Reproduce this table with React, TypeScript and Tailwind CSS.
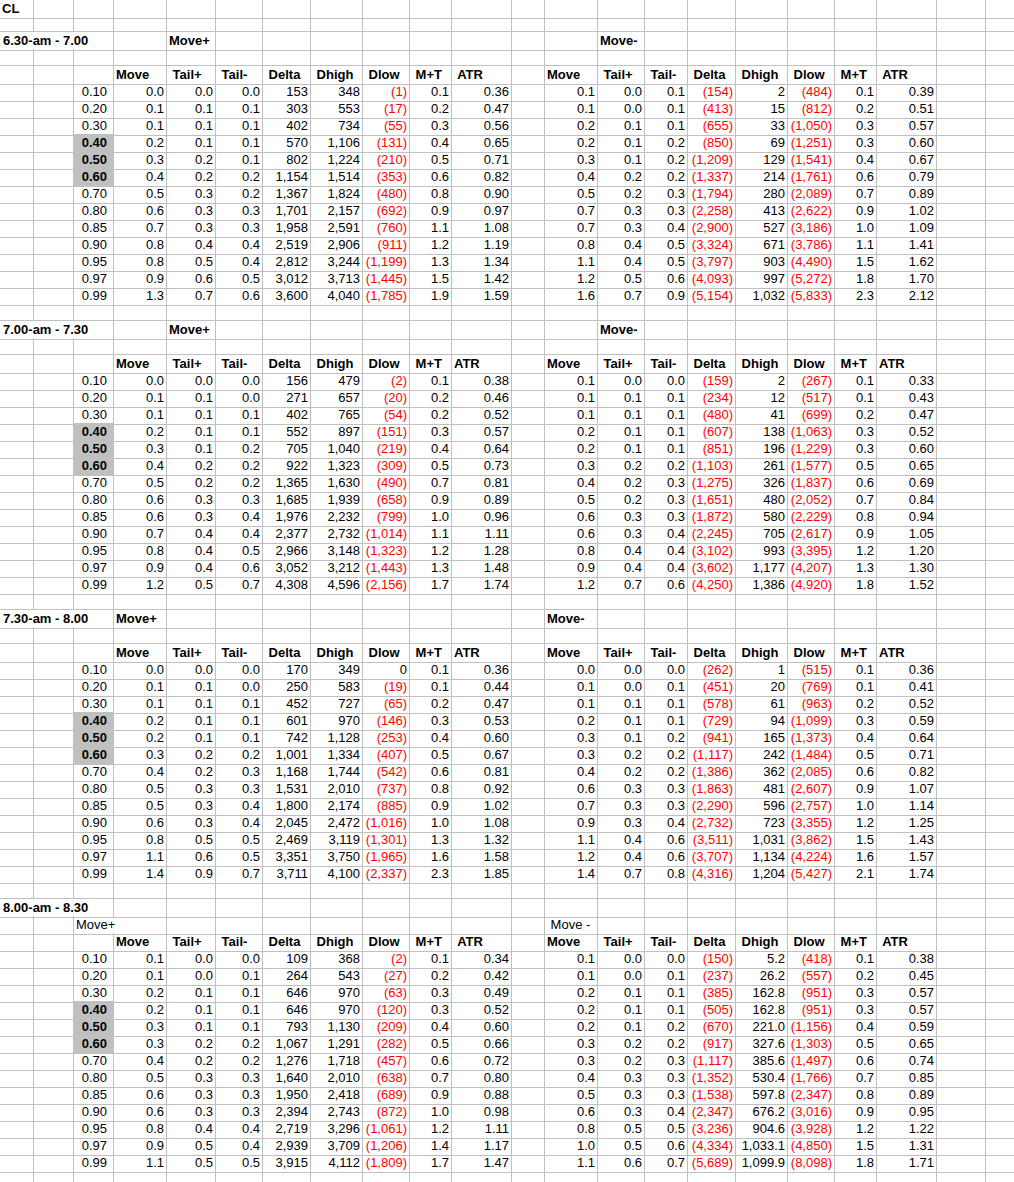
import clsx from 'clsx';
import type { ReactNode } from 'react';

// column template: A .. V, widths include the 1px right gridline
const GRID =
  'grid grid-cols-[34px_40px_40px_53px_49px_47px_48px_52px_47px_42px_60px_33px_53px_47px_43px_48px_52px_47px_42px_60px_49px_64px]';

const PCTS = ['0.10', '0.20', '0.30', '0.40', '0.50', '0.60', '0.70', '0.80', '0.85', '0.90', '0.95', '0.97', '0.99'];
const SHADED = ['0.40', '0.50', '0.60'];

type Section = {
  title: string;
  atrSpace: boolean;
  left: string[];
  right: string[];
};

const sections: Section[] = [
  {
    title: '6.30-am - 7.00',
    atrSpace: true,
    left: [
      '0.0 0.0 0.0 153 348 (1) 0.1 0.36',
      '0.1 0.1 0.1 303 553 (17) 0.2 0.47',
      '0.1 0.1 0.1 402 734 (55) 0.3 0.56',
      '0.2 0.1 0.1 570 1,106 (131) 0.4 0.65',
      '0.3 0.2 0.1 802 1,224 (210) 0.5 0.71',
      '0.4 0.2 0.2 1,154 1,514 (353) 0.6 0.82',
      '0.5 0.3 0.2 1,367 1,824 (480) 0.8 0.90',
      '0.6 0.3 0.3 1,701 2,157 (692) 0.9 0.97',
      '0.7 0.3 0.3 1,958 2,591 (760) 1.1 1.08',
      '0.8 0.4 0.4 2,519 2,906 (911) 1.2 1.19',
      '0.8 0.5 0.4 2,812 3,244 (1,199) 1.3 1.34',
      '0.9 0.6 0.5 3,012 3,713 (1,445) 1.5 1.42',
      '1.3 0.7 0.6 3,600 4,040 (1,785) 1.9 1.59',
    ],
    right: [
      '0.1 0.0 0.1 (154) 2 (484) 0.1 0.39',
      '0.1 0.0 0.1 (413) 15 (812) 0.2 0.51',
      '0.2 0.1 0.1 (655) 33 (1,050) 0.3 0.57',
      '0.2 0.1 0.2 (850) 69 (1,251) 0.3 0.60',
      '0.3 0.1 0.2 (1,209) 129 (1,541) 0.4 0.67',
      '0.4 0.2 0.2 (1,337) 214 (1,761) 0.6 0.79',
      '0.5 0.2 0.3 (1,794) 280 (2,089) 0.7 0.89',
      '0.7 0.3 0.3 (2,258) 413 (2,622) 0.9 1.02',
      '0.7 0.3 0.4 (2,900) 527 (3,186) 1.0 1.09',
      '0.8 0.4 0.5 (3,324) 671 (3,786) 1.1 1.41',
      '1.1 0.4 0.5 (3,797) 903 (4,490) 1.5 1.62',
      '1.2 0.5 0.6 (4,093) 997 (5,272) 1.8 1.70',
      '1.6 0.7 0.9 (5,154) 1,032 (5,833) 2.3 2.12',
    ],
  },
  {
    title: '7.00-am - 7.30',
    atrSpace: false,
    left: [
      '0.0 0.0 0.0 156 479 (2) 0.1 0.38',
      '0.1 0.1 0.0 271 657 (20) 0.2 0.46',
      '0.1 0.1 0.1 402 765 (54) 0.2 0.52',
      '0.2 0.1 0.1 552 897 (151) 0.3 0.57',
      '0.3 0.1 0.2 705 1,040 (219) 0.4 0.64',
      '0.4 0.2 0.2 922 1,323 (309) 0.5 0.73',
      '0.5 0.2 0.2 1,365 1,630 (490) 0.7 0.81',
      '0.6 0.3 0.3 1,685 1,939 (658) 0.9 0.89',
      '0.6 0.3 0.4 1,976 2,232 (799) 1.0 0.96',
      '0.7 0.4 0.4 2,377 2,732 (1,014) 1.1 1.11',
      '0.8 0.4 0.5 2,966 3,148 (1,323) 1.2 1.28',
      '0.9 0.4 0.6 3,052 3,212 (1,443) 1.3 1.48',
      '1.2 0.5 0.7 4,308 4,596 (2,156) 1.7 1.74',
    ],
    right: [
      '0.1 0.0 0.0 (159) 2 (267) 0.1 0.33',
      '0.1 0.1 0.1 (234) 12 (517) 0.1 0.43',
      '0.1 0.1 0.1 (480) 41 (699) 0.2 0.47',
      '0.2 0.1 0.1 (607) 138 (1,063) 0.3 0.52',
      '0.2 0.1 0.1 (851) 196 (1,229) 0.3 0.60',
      '0.3 0.2 0.2 (1,103) 261 (1,577) 0.5 0.65',
      '0.4 0.2 0.3 (1,275) 326 (1,837) 0.6 0.69',
      '0.5 0.2 0.3 (1,651) 480 (2,052) 0.7 0.84',
      '0.6 0.3 0.3 (1,872) 580 (2,229) 0.8 0.94',
      '0.6 0.3 0.4 (2,245) 705 (2,617) 0.9 1.05',
      '0.8 0.4 0.4 (3,102) 993 (3,395) 1.2 1.20',
      '0.9 0.4 0.4 (3,602) 1,177 (4,207) 1.3 1.30',
      '1.2 0.7 0.6 (4,250) 1,386 (4,920) 1.8 1.52',
    ],
  },
  {
    title: '7.30-am - 8.00',
    atrSpace: false,
    left: [
      '0.0 0.0 0.0 170 349 0 0.1 0.36',
      '0.1 0.1 0.0 250 583 (19) 0.1 0.44',
      '0.1 0.1 0.1 452 727 (65) 0.2 0.47',
      '0.2 0.1 0.1 601 970 (146) 0.3 0.53',
      '0.2 0.1 0.1 742 1,128 (253) 0.4 0.60',
      '0.3 0.2 0.2 1,001 1,334 (407) 0.5 0.67',
      '0.4 0.2 0.3 1,168 1,744 (542) 0.6 0.81',
      '0.5 0.3 0.3 1,531 2,010 (737) 0.8 0.92',
      '0.5 0.3 0.4 1,800 2,174 (885) 0.9 1.02',
      '0.6 0.3 0.4 2,045 2,472 (1,016) 1.0 1.08',
      '0.8 0.5 0.5 2,469 3,119 (1,301) 1.3 1.32',
      '1.1 0.6 0.5 3,351 3,750 (1,965) 1.6 1.58',
      '1.4 0.9 0.7 3,711 4,100 (2,337) 2.3 1.85',
    ],
    right: [
      '0.0 0.0 0.0 (262) 1 (515) 0.1 0.36',
      '0.1 0.0 0.1 (451) 20 (769) 0.1 0.41',
      '0.1 0.1 0.1 (578) 61 (963) 0.2 0.52',
      '0.2 0.1 0.1 (729) 94 (1,099) 0.3 0.59',
      '0.3 0.1 0.2 (941) 165 (1,373) 0.4 0.64',
      '0.3 0.2 0.2 (1,117) 242 (1,484) 0.5 0.71',
      '0.4 0.2 0.2 (1,386) 362 (2,085) 0.6 0.82',
      '0.6 0.3 0.3 (1,863) 481 (2,607) 0.9 1.07',
      '0.7 0.3 0.3 (2,290) 596 (2,757) 1.0 1.14',
      '0.9 0.3 0.4 (2,732) 723 (3,355) 1.2 1.25',
      '1.1 0.4 0.6 (3,511) 1,031 (3,862) 1.5 1.43',
      '1.2 0.4 0.6 (3,707) 1,134 (4,224) 1.6 1.57',
      '1.4 0.7 0.8 (4,316) 1,204 (5,427) 2.1 1.74',
    ],
  },
  {
    title: '8.00-am - 8.30',
    atrSpace: true,
    left: [
      '0.1 0.0 0.0 109 368 (2) 0.1 0.34',
      '0.1 0.0 0.1 264 543 (27) 0.2 0.42',
      '0.2 0.1 0.1 646 970 (63) 0.3 0.49',
      '0.2 0.1 0.1 646 970 (120) 0.3 0.52',
      '0.3 0.1 0.1 793 1,130 (209) 0.4 0.60',
      '0.3 0.2 0.2 1,067 1,291 (282) 0.5 0.66',
      '0.4 0.2 0.2 1,276 1,718 (457) 0.6 0.72',
      '0.5 0.3 0.3 1,640 2,010 (638) 0.7 0.80',
      '0.6 0.3 0.3 1,950 2,418 (689) 0.9 0.88',
      '0.6 0.3 0.3 2,394 2,743 (872) 1.0 0.98',
      '0.8 0.4 0.4 2,719 3,296 (1,061) 1.2 1.11',
      '0.9 0.5 0.4 2,939 3,709 (1,206) 1.4 1.17',
      '1.1 0.5 0.5 3,915 4,112 (1,809) 1.7 1.47',
    ],
    right: [
      '0.1 0.0 0.0 (150) 5.2 (418) 0.1 0.38',
      '0.1 0.0 0.1 (237) 26.2 (557) 0.2 0.45',
      '0.2 0.1 0.1 (385) 162.8 (951) 0.3 0.57',
      '0.2 0.1 0.1 (505) 162.8 (951) 0.3 0.57',
      '0.2 0.1 0.2 (670) 221.0 (1,156) 0.4 0.59',
      '0.3 0.2 0.2 (917) 327.6 (1,303) 0.5 0.65',
      '0.3 0.2 0.3 (1,117) 385.6 (1,497) 0.6 0.74',
      '0.4 0.3 0.3 (1,352) 530.4 (1,766) 0.7 0.85',
      '0.5 0.3 0.3 (1,538) 597.8 (2,347) 0.8 0.89',
      '0.6 0.3 0.4 (2,347) 676.2 (3,016) 0.9 0.95',
      '0.8 0.5 0.5 (3,236) 904.6 (3,928) 1.2 1.22',
      '1.0 0.5 0.6 (4,334) 1,033.1 (4,850) 1.5 1.31',
      '1.1 0.6 0.7 (5,689) 1,099.9 (8,098) 1.8 1.71',
    ],
  },
];

type CellProps = {
  text?: string;
  span?: 2 | 3;
  right?: boolean;
  bold?: boolean;
  fill?: boolean;
  className?: string;
};

function Cell({ text = '', span, right, bold, fill, className }: CellProps) {
  const red = text.startsWith('(');
  return (
    <div
      className={clsx(
        'h-full border-r border-b border-[#c0c0c0] whitespace-pre leading-[18px]',
        span === 2 && 'col-span-2',
        span === 3 && 'col-span-3',
        right ? 'text-right pr-[2px]' : 'pl-[2px]',
        bold && 'font-bold',
        fill && 'bg-[#c0c0c0]',
        red ? 'text-[#ff0000]' : 'text-black',
        className,
      )}
    >
      {text}
    </div>
  );
}

function Row({ children, first }: { children?: ReactNode; first?: boolean }) {
  return <div className={clsx(GRID, first ? 'h-[15px]' : 'h-[17px]')}>{children}</div>;
}

function blanks(n: number) {
  return Array.from({ length: n }, (_, i) => <Cell key={`b${i}`} />);
}

function BlankRow() {
  return <Row>{blanks(22)}</Row>;
}

function TitleRow({ title, at }: { title: string; at: 'D' | 'E' | 'none' }) {
  // D..V is 19 cells after the A-C span
  return (
    <Row>
      <Cell text={title} span={3} bold className="pl-[3px]" />
      {at === 'D' && (
        <>
          <Cell text="Move+" bold />
          {blanks(8)}
          <Cell text="Move-" bold />
          {blanks(9)}
        </>
      )}
      {at === 'E' && (
        <>
          <Cell />
          <Cell text="Move+" bold />
          {blanks(8)}
          <Cell text="Move-" bold />
          {blanks(8)}
        </>
      )}
      {at === 'none' && blanks(19)}
    </Row>
  );
}

function HeaderRow({ atrSpace }: { atrSpace: boolean }) {
  const heads = ['Move', ' Tail+', ' Tail-', ' Delta', ' Dhigh', ' Dlow', ' M+T', atrSpace ? ' ATR' : 'ATR'];
  return (
    <Row>
      {blanks(3)}
      {heads.map((h) => (
        <Cell key={`l${h}`} text={h} bold />
      ))}
      <Cell />
      {heads.map((h) => (
        <Cell key={`r${h}`} text={h} bold />
      ))}
      <Cell />
      <Cell />
    </Row>
  );
}

function DataRow({ pct, left, right }: { pct: string; left: string; right: string }) {
  const shaded = SHADED.includes(pct);
  return (
    <Row>
      <Cell />
      <Cell />
      <Cell text={pct} right bold={shaded} fill={shaded} className="pr-[6px]" />
      {left.split(' ').map((v, i) => (
        <Cell key={`l${i}`} text={v} right />
      ))}
      <Cell />
      {right.split(' ').map((v, i) => (
        <Cell key={`r${i}`} text={v} right />
      ))}
      <Cell />
      <Cell />
    </Row>
  );
}

function Block({ s, index }: { s: Section; index: number }) {
  return (
    <>
      {index === 0 && <TitleRow title={s.title} at="E" />}
      {index === 1 && <TitleRow title={s.title} at="E" />}
      {index === 2 && <TitleRow title={s.title} at="D" />}
      {index === 3 && <TitleRow title={s.title} at="none" />}

      {index === 3 ? (
        <Row>
          <Cell />
          <Cell />
          <Cell text="Move+" span={2} />
          {blanks(8)}
          <Cell text=" Move -" />
          {blanks(9)}
        </Row>
      ) : (
        <BlankRow />
      )}

      <HeaderRow atrSpace={s.atrSpace} />
      {PCTS.map((p, i) => (
        <DataRow key={p} pct={p} left={s.left[i]} right={s.right[i]} />
      ))}
    </>
  );
}

export default function App() {
  return (
    <div className="w-screen h-screen overflow-hidden bg-white text-[13px] font-['Liberation_Sans',Arial,sans-serif]">
      <Row first>
        <Cell text="CL" bold className="leading-[15px]" />
        {blanks(21)}
      </Row>
      <BlankRow />
      {sections.map((s, i) => (
        <div key={s.title}>
          <Block s={s} index={i} />
          <BlankRow />
        </div>
      ))}
      <BlankRow />
    </div>
  );
}
